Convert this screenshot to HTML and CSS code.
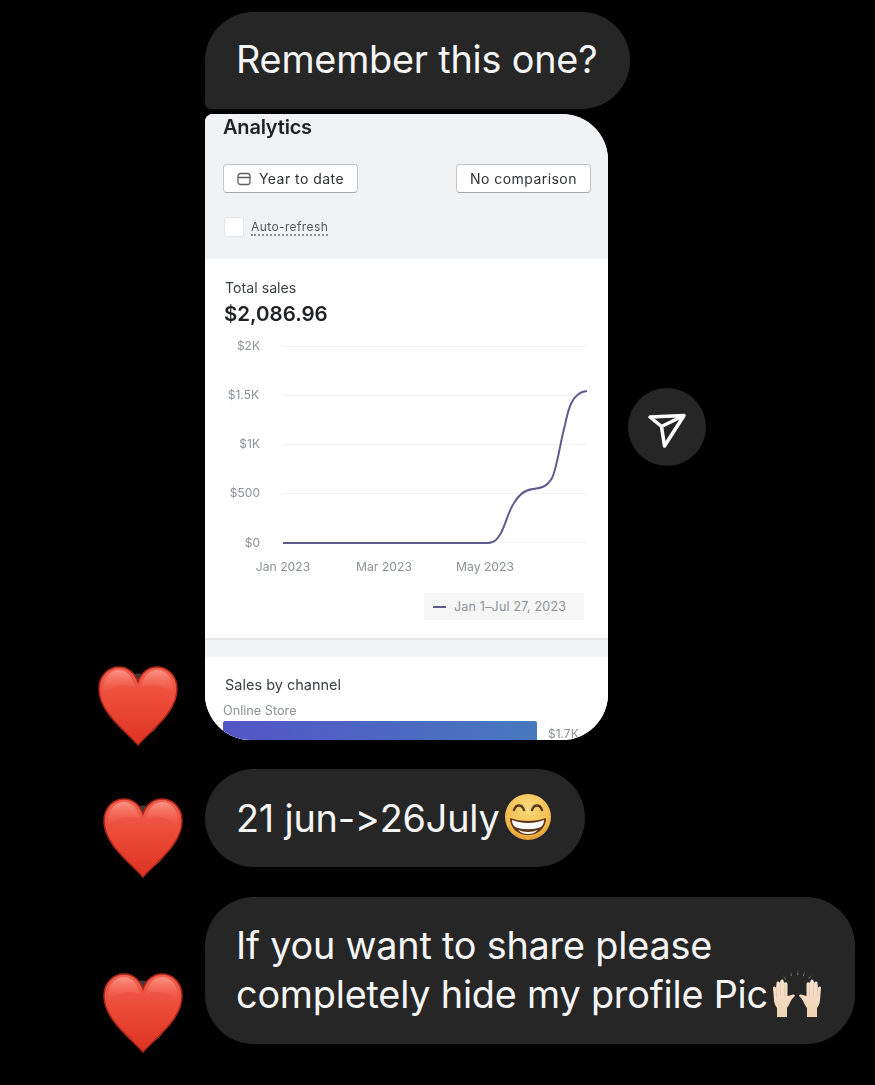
FILE: index.html
```html
<!DOCTYPE html>
<html lang="en">
<head>
<meta charset="utf-8">
<title>Messages</title>
<link rel="stylesheet" href="styles.css">
</head>
<body>
<svg class="defs" width="0" height="0" aria-hidden="true">
  <defs>
    <linearGradient id="heartFill" x1="0" y1="0" x2="0" y2="1">
      <stop offset="0" stop-color="#f0604f"/>
      <stop offset="0.45" stop-color="#ec4a37"/>
      <stop offset="1" stop-color="#dd3322"/>
    </linearGradient>
    <linearGradient id="heartShine" x1="0" y1="0" x2="0" y2="1">
      <stop offset="0" stop-color="#ff9d8e" stop-opacity="0.85"/>
      <stop offset="1" stop-color="#f0604f" stop-opacity="0"/>
    </linearGradient>
    <symbol id="heart" viewBox="0 0 82 82">
      <path d="M22 58 C28 76 54 76 62 58 Z" fill="#8d8d8d"/>
      <path d="M31 16 C36 6 46 6 51 16 L41 28 Z" fill="#3a3a3a"/>
      <path d="M41 80 C30 67 2 48 2 24 C2 10 12 2 22 2 C31 2 38 8 41 17 C44 8 51 2 60 2 C70 2 80 10 80 24 C80 48 52 67 41 80Z" fill="url(#heartFill)" stroke="#a92517" stroke-width="1.500"/>
      <path d="M6 24 C6 12 14 5 22 5 C30 5 36 12 38 22 C28 18 14 20 6 30Z" fill="url(#heartShine)"/>
      <path d="M76 24 C76 12 68 5 60 5 C52 5 46 12 44 22 C54 18 68 20 76 30Z" fill="url(#heartShine)"/>
    </symbol>
    <radialGradient id="faceFill" cx="0.5" cy="0.3" r="0.8">
      <stop offset="0" stop-color="#fbdc7c"/>
      <stop offset="0.65" stop-color="#f2bb4e"/>
      <stop offset="1" stop-color="#d98c2a"/>
    </radialGradient>
    <linearGradient id="handFill" x1="0" y1="0" x2="0" y2="1">
      <stop offset="0" stop-color="#f7e1cb"/>
      <stop offset="1" stop-color="#efd2b4"/>
    </linearGradient>
  </defs>
</svg>

<main class="thread">
  <div class="bubble bubble-first">Remember this one?</div>

  <div class="media-row">
    <article class="card">
      <section class="card-head">
        <h1 class="card-title">Analytics</h1>
        <div class="filters">
          <span class="filter">
            <svg class="cal" viewBox="0 0 14 14" width="14" height="14"><rect x="1" y="1.500" width="12" height="11" rx="2.500" fill="none" stroke="#5c5f62" stroke-width="1.300"/><path d="M1 5.500H13" stroke="#5c5f62" stroke-width="1.300"/></svg>
            Year to date
          </span>
          <span class="filter">No comparison</span>
        </div>
        <div class="refresh">
          <span class="check"></span>
          <span class="refresh-label">Auto-refresh</span>
        </div>
      </section>

      <section class="panel">
        <div class="metric-label">Total sales</div>
        <div class="metric-value">$2,086.96</div>
        <svg class="chart" width="403" height="247" viewBox="0 0 403 247">
          <g class="grid">
            <path d="M78 11.500H382"/>
            <path d="M78 60.500H382"/>
            <path d="M78 109.500H382"/>
            <path d="M78 158.500H382"/>
            <path d="M78 207.500H382"/>
          </g>
          <g class="axis-y">
            <text x="55" y="15">$2K</text>
            <text x="54" y="64">$1.5K</text>
            <text x="55" y="113">$1K</text>
            <text x="55" y="162">$500</text>
            <text x="55" y="212">$0</text>
          </g>
          <g class="axis-x">
            <text x="78" y="236">Jan 2023</text>
            <text x="179" y="236">Mar 2023</text>
            <text x="280" y="236">May 2023</text>
          </g>
          <path class="curve" d="M78 208 H283 C290 208 293 203 296 198 C301 188 304 175 309 168 C314 160 319 155 328 154 C336 153 342 152 347 143 C352 133 355 108 360 90 C363 75 367 57 382 56"/>
        </svg>
        <div class="legend-row">
          <span class="legend"><span class="legend-dash"></span>Jan 1–Jul 27, 2023</span>
        </div>
      </section>

      <div class="divider"></div>

      <section class="channel">
        <div class="channel-title">Sales by channel</div>
        <div class="channel-name">Online Store</div>
        <div class="channel-bar-row">
          <div class="channel-bar"></div>
          <span class="channel-value">$1.7K</span>
        </div>
      </section>
    </article>

    <button class="share" type="button" aria-label="Share">
      <svg viewBox="0 0 40 36" width="40" height="36"><path d="M3 4 L37 2.500 L17.500 33 L14.500 13.500 Z M14.500 13.500 L37 2.500" fill="none" stroke="#fff" stroke-width="3.500" stroke-linejoin="round"/></svg>
    </button>

    <svg class="heart heart-one" aria-hidden="true"><use href="#heart"/></svg>
  </div>

  <div class="bubble bubble-date">
    <span>21 jun-&gt;26July</span>
    <svg class="emoji-face" viewBox="0 0 48 48" width="48" height="48" aria-hidden="true">
      <circle cx="24" cy="24" r="23" fill="url(#faceFill)"/>
      <path d="M10 17 C12 11 18 11 20 17 M28 17 C30 11 36 11 38 17" fill="none" stroke="#5a3a1a" stroke-width="2.400" stroke-linecap="round"/>
      <path d="M6 25 C16 29 32 29 42 25 C42 36 33 42 24 42 C15 42 6 36 6 25Z" fill="#5c3417"/>
      <path d="M8 27 C17 31 31 31 40 27 C40 31 38 33 37 34 C30 37 18 37 11 34 C10 33 8 31 8 27Z" fill="#fff"/>
      <path d="M14 37 C20 39.500 28 39.500 34 37 C31 40 27 41 24 41 C21 41 17 40 14 37Z" fill="#fff"/>
    </svg>
    <svg class="heart heart-two" aria-hidden="true"><use href="#heart"/></svg>
  </div>

  <div class="bubble bubble-long">
    <p class="long-text">If you want to share please<br>completely hide my profile Pic<svg class="emoji-hands" viewBox="0 0 52 48" width="52" height="48" aria-hidden="true">
      <g fill="#6d6a66">
        <path d="M12 5l3 4-1 1zM20 1l1 5h-1.500zM27 0l.5 5h-1.500zM34 1l-1 5h-1.500zM41 5l-3 4-1-1z"/>
      </g>
      <path d="M3 30 L2 18 C2 16 4.500 16 5 18 L5.500 13 C5.500 11 8.500 11 8.500 13 L9.500 11 C10 9 12.500 9 12.500 11 L13.500 13 C14 11.500 16.500 12 16.500 14 L16.500 26 L22 24.500 C24 24 24.500 26 23 27 C20 29 19 34 16 38 L16 47 L6 47 L6 38 C4 35 3 33 3 30Z" fill="url(#handFill)"/>
      <path d="M49 30 L50 18 C50 16 47.500 16 47 18 L46.500 13 C46.500 11 43.500 11 43.500 13 L42.500 11 C42 9 39.500 9 39.500 11 L38.500 13 C38 11.500 35.500 12 35.500 14 L35.500 26 L30 24.500 C28 24 27.500 26 29 27 C32 29 33 34 36 38 L36 47 L46 47 L46 38 C48 35 49 33 49 30Z" fill="url(#handFill)"/>
      <path d="M5.500 16V27M9.500 13V26M13.500 14V26M46.500 16V27M42.500 13V26M38.500 14V26" stroke="#dcbfa2" stroke-width="0.600" fill="none"/>
    </svg></p>
    <svg class="heart heart-three" aria-hidden="true"><use href="#heart"/></svg>
  </div>
</main>
</body>
</html>
```

FILE: styles.css
```css
html, body {
  margin: 0;
  padding: 0;
  background: #000;
  height: 100%;
  overflow: hidden;
}

.defs {
  position: absolute;
}

.thread {
  display: flex;
  flex-direction: column;
  align-items: flex-start;
  padding: 12px 0 0 205px;
  font-family: Inter, "Liberation Sans", sans-serif;
}

.bubble {
  position: relative;
  box-sizing: border-box;
  background: #262626;
  color: #f5f5f5;
  font-size: 37.800px;
  letter-spacing: -0.2px;
  border-radius: 49px;
  padding: 0 31px;
  display: flex;
  align-items: center;
  white-space: nowrap;
}

.bubble-first {
  width: 425px;
  height: 97px;
  padding-bottom: 4px;
  border-bottom-left-radius: 6px;
}

.media-row {
  position: relative;
  display: flex;
  align-items: center;
  gap: 20px;
  margin-top: 5px;
}

.card {
  width: 403px;
  height: 626px;
  overflow: hidden;
  background: #fff;
  border-radius: 8px 46px 46px 46px;
  filter: blur(0.35px);
  color: #202223;
}

.card-head {
  box-sizing: border-box;
  height: 145px;
  background: #f1f2f4;
  padding: 0 17px 0 18px;
}

.card-title {
  margin: 0;
  padding-top: 1px;
  font-size: 20px;
  line-height: 24px;
  font-weight: 600;
  letter-spacing: -0.2px;
}

.filters {
  display: flex;
  justify-content: space-between;
  margin-top: 25px;
}

.filter {
  box-sizing: border-box;
  width: 135px;
  height: 29px;
  display: flex;
  align-items: center;
  justify-content: center;
  gap: 8px;
  background: #fff;
  border: 1px solid #c4c6c9;
  border-bottom-color: #a8abae;
  border-radius: 4px;
  font-size: 14px;
  letter-spacing: 0.45px;
  color: #303234;
}

.refresh {
  display: flex;
  align-items: center;
  gap: 7px;
  margin: 24px 0 0 1px;
}

.check {
  width: 20px;
  height: 20px;
  box-sizing: border-box;
  background: #fff;
  border: 1px solid #e3e4e6;
  border-radius: 3px;
}

.refresh-label {
  font-size: 12px;
  letter-spacing: 0.4px;
  color: #55585b;
  border-bottom: 2px dotted #8a8c8f;
  line-height: 15px;
}

.panel {
  box-sizing: border-box;
  height: 381px;
  background: #fff;
  border-bottom: 2px solid #e6e7e9;
}

.metric-label {
  padding: 20px 0 0 20px;
  font-size: 14.200px;
  line-height: 17px;
  color: #3c3f41;
}

.metric-value {
  padding: 5px 0 0 19px;
  font-size: 20.500px;
  line-height: 26px;
  font-weight: 600;
}

.chart {
  display: block;
  margin-top: 8px;
  margin-bottom: 0;
}

.grid path {
  stroke: #f0f1f2;
  stroke-width: 1;
  fill: none;
}

.axis-y text {
  font-size: 12px;
  fill: #8c9196;
  text-anchor: end;
}

.axis-x text {
  font-size: 12.200px;
  fill: #8c9196;
  text-anchor: middle;
}

.curve {
  fill: none;
  stroke: #5f5a8e;
  stroke-width: 2;
}

.legend-row {
  display: flex;
  justify-content: flex-end;
  padding: 11px 24px 0 0;
}

.legend {
  display: flex;
  align-items: center;
  gap: 8px;
  box-sizing: border-box;
  width: 160px;
  height: 27px;
  padding-left: 9px;
  background: #f6f6f7;
  font-size: 12.500px;
  letter-spacing: 0.2px;
  color: #8c9196;
  white-space: nowrap;
}

.legend-dash {
  width: 13px;
  height: 2px;
  background: #5f5a8e;
}

.divider {
  height: 17px;
  background: #f3f4f5;
}

.channel {
  background: #fff;
  height: 83px;
  overflow: hidden;
}

.channel-title {
  padding: 19px 0 0 20px;
  font-size: 14.500px;
  line-height: 18px;
  color: #3c3f41;
}

.channel-name {
  padding: 9px 0 0 18px;
  font-size: 12.700px;
  line-height: 15px;
  color: #8c9196;
}

.channel-bar-row {
  display: flex;
  gap: 11px;
  margin: 3px 0 0 18px;
}

.channel-bar {
  width: 314px;
  height: 24px;
  border-radius: 2px 2px 0 0;
  background: linear-gradient(90deg, #5355c6, #4779bf);
}

.channel-value {
  font-size: 12px;
  line-height: 26px;
  color: #8c9196;
}

.share {
  width: 78px;
  height: 78px;
  padding: 0;
  border: 0;
  border-radius: 50%;
  background: #262626;
  display: flex;
  align-items: center;
  justify-content: center;
}

.share svg {
  margin-top: 8px;
}

.bubble-date {
  width: 380px;
  height: 98px;
  margin-top: 29px;
}

.emoji-face {
  margin: -3px 0 0 5px;
  flex: none;
}

.bubble-long {
  width: 650px;
  height: 147px;
  margin-top: 30px;
  padding-bottom: 2px;
}

.long-text {
  margin: 0;
  line-height: 49px;
}

.emoji-hands {
  vertical-align: -10px;
  margin-left: 3px;
}

.heart {
  position: absolute;
  width: 82px;
  height: 82px;
}

.heart-one {
  left: -108px;
  bottom: -7px;
}

.heart-two {
  left: -103px;
  top: 28px;
}

.heart-three {
  left: -103px;
  top: 75px;
}
```
